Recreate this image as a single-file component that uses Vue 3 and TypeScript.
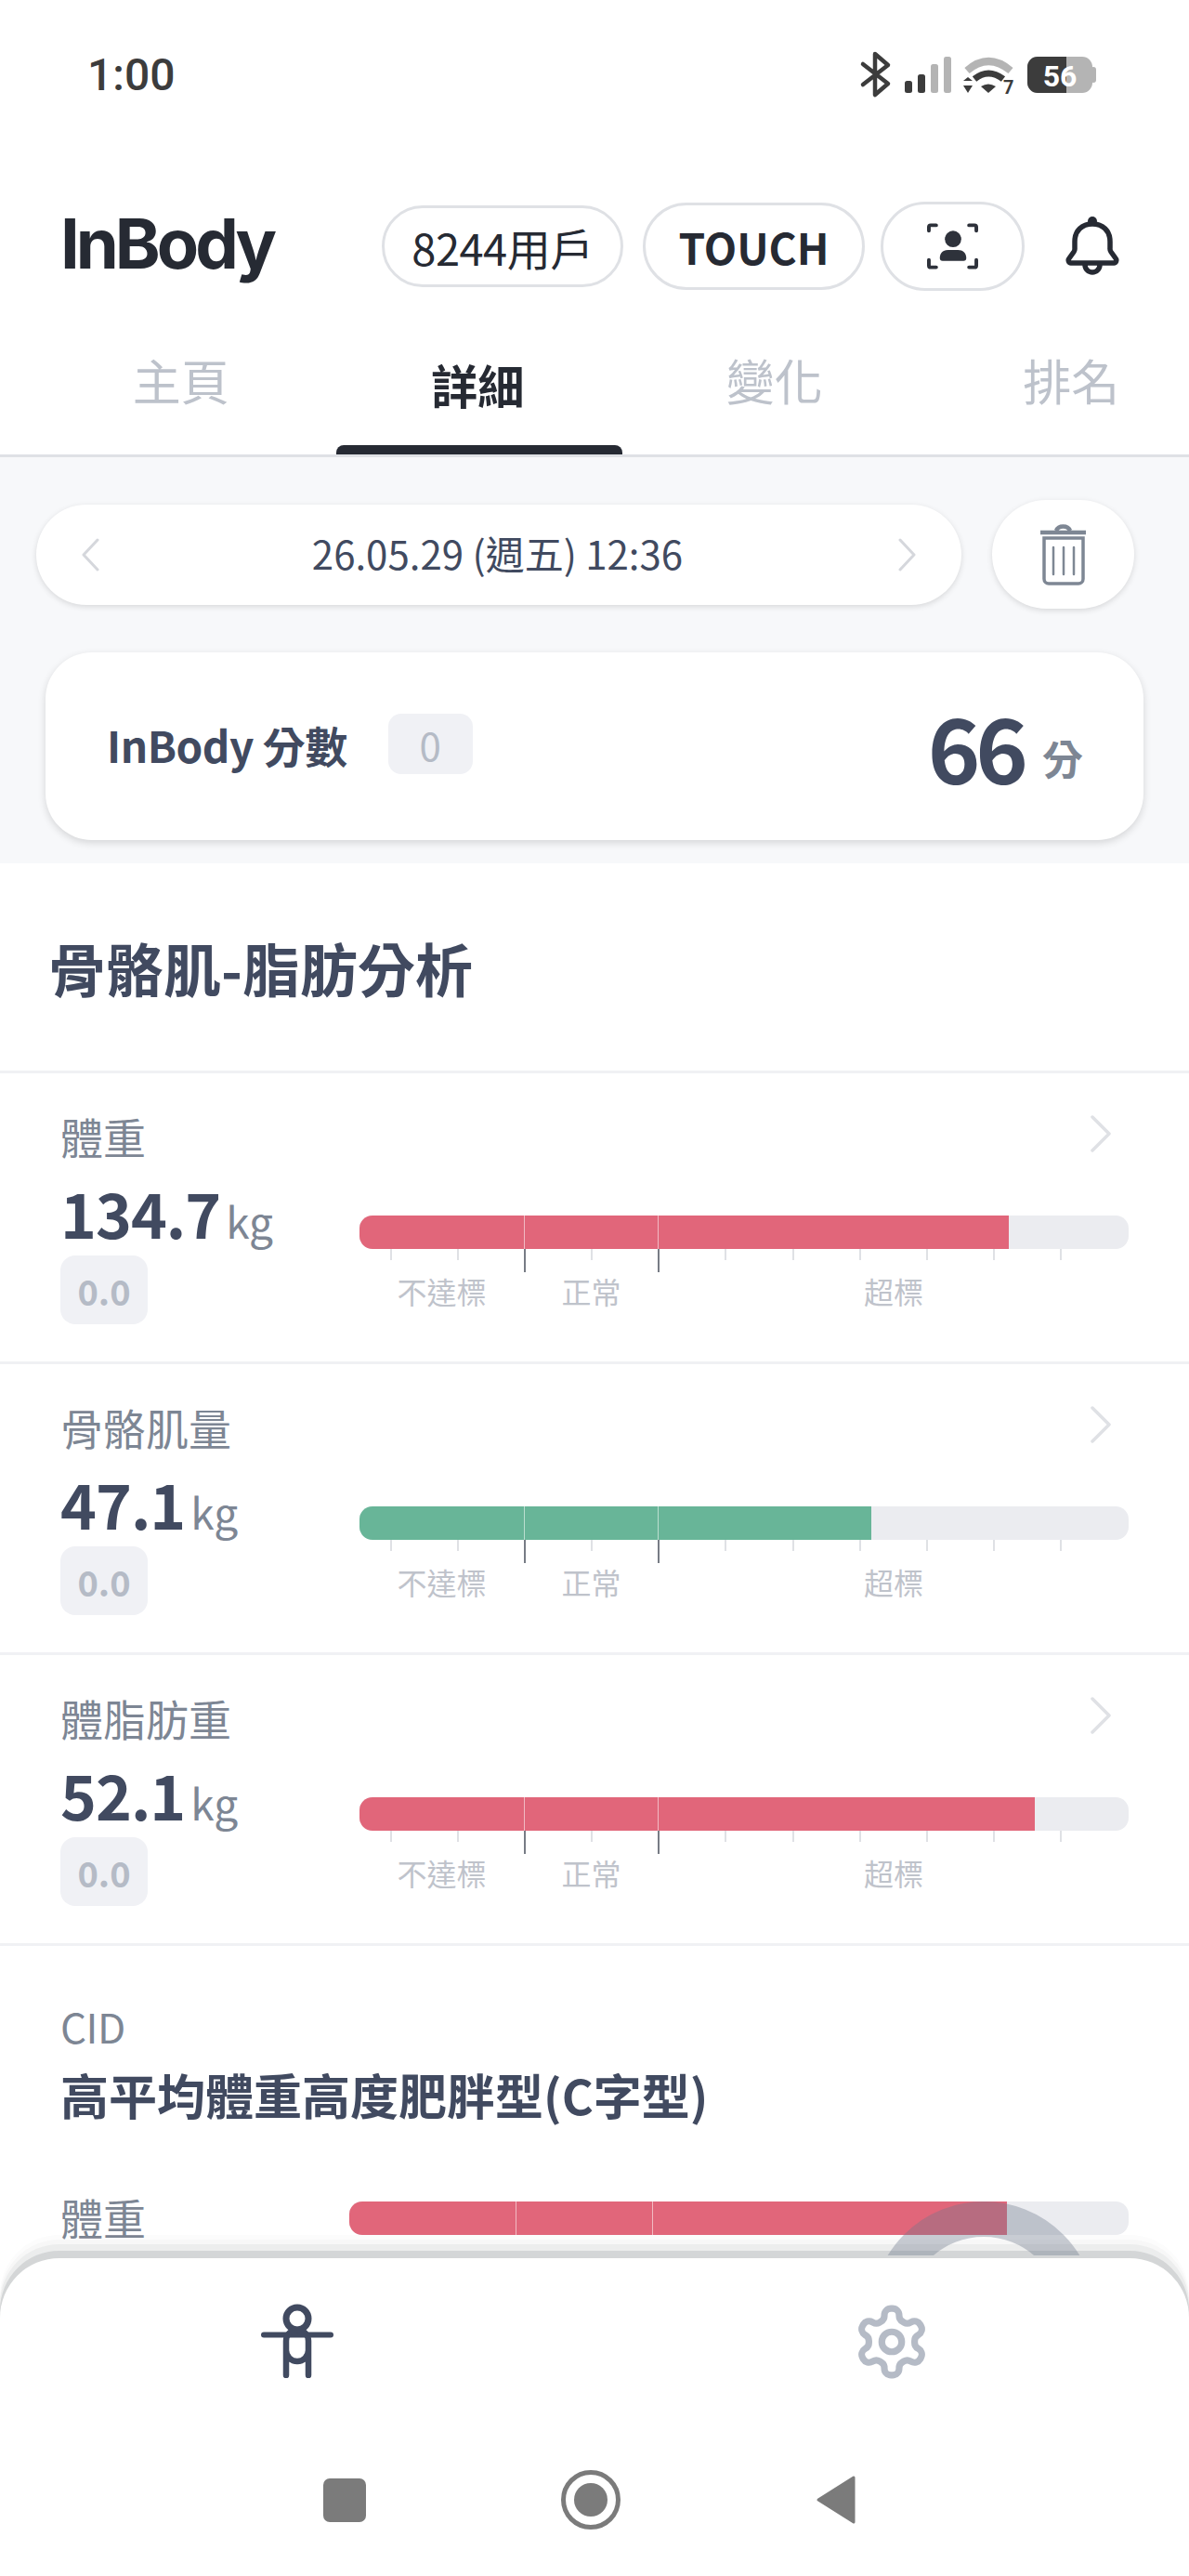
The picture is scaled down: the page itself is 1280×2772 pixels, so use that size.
<script setup lang="ts">
interface Row { label: string; value: string; color: string; fill: number }
const tabs: string[] = ['主頁', '詳細', '變化', '排名']
const rows: Row[] = [
  { label: '體重', value: '134.7', color: '#e1667a', fill: 699 },
  { label: '骨骼肌量', value: '47.1', color: '#68b598', fill: 551 },
  { label: '體脂肪重', value: '52.1', color: '#e1667a', fill: 727 },
]
const ticks: number[] = [0, 1, 2, 3, 4, 5, 6, 7, 8, 9, 10]
</script>

<template>
  <div class="page">
    <div class="status">
      <span class="time">1:00</span>
      <svg class="status-icons" width="270" height="60" viewBox="920 50 270 60">
        <path d="M929 69 L956 90 L942 102 V58 L956 70 L929 91" fill="none" stroke="#3c3c3c" stroke-width="4.5" stroke-linejoin="round" stroke-linecap="round" />
        <rect x="974" y="87" width="8" height="13" rx="2.5" fill="#3c3c3c" />
        <rect x="988" y="80" width="8" height="20" rx="2.5" fill="#3c3c3c" />
        <rect x="1002" y="69" width="8" height="31" rx="2.5" fill="#b4b4b4" />
        <rect x="1016" y="61" width="8" height="39" rx="2.5" fill="#b4b4b4" />
        <path d="M1041 76 Q1064 56 1088 76" fill="none" stroke="#b4b4b4" stroke-width="8" />
        <path d="M1049 85 Q1064 73 1080 85" fill="none" stroke="#3c3c3c" stroke-width="7" />
        <path d="M1056 93 Q1064 88 1072 93 L1064 100 Z" fill="#3c3c3c" />
        <path d="M1037 87 L1042 83 L1047 87 Z M1037 92 L1047 92 L1042 100 Z" fill="#3c3c3c" />
        <text x="1080" y="101" class="wifi-num">7</text>
        <rect x="1106" y="61" width="70" height="39" rx="11" fill="#b4b4b4" />
        <rect x="1174" y="72" width="6" height="17" rx="3" fill="#b4b4b4" />
        <path d="M1148 61 H1117 a11 11 0 0 0 -11 11 V89 a11 11 0 0 0 11 11 H1148 Z" fill="#3c3c3c" />
        <text x="1141" y="93" class="bat-num">56</text>
      </svg>
    </div>

    <header class="top">
      <span class="logo">InBody</span>
      <div class="pill pill-user">8244用戶</div>
      <div class="pill pill-touch">TOUCH</div>
      <div class="pill pill-face">
        <svg width="56" height="54" viewBox="996 240 57 54">
          <path d="M998 250 V246 a2 2 0 0 1 2 -2 H1006 M1042 244 H1048 a2 2 0 0 1 2 2 V250 M998 282 V288 a2 2 0 0 0 2 2 H1006 M1042 290 H1048 a2 2 0 0 0 2 -2 V282" fill="none" stroke="#2e323b" stroke-width="4" stroke-linecap="round" />
          <circle cx="1024.5" cy="259" r="9" fill="#2e323b" />
          <path d="M1010 280 C1010 274 1014 271 1019 271 H1030 C1035 271 1039 274 1039 280 a3 3 0 0 1 -3 3 H1013 a3 3 0 0 1 -3 -3 Z" fill="#2e323b" />
        </svg>
      </div>
      <svg class="bell" width="58" height="65" viewBox="0 0 58 65">
        <circle cx="29" cy="5" r="5" fill="#262a33" />
        <path d="M6 50 H52 a3 3 0 0 0 2 -5 l-5 -7 a6 6 0 0 1 -1 -4 V27 C48 15 40 8 29 8 C18 8 10 15 10 27 V34 a6 6 0 0 1 -1 4 l-5 7 a3 3 0 0 0 2 5 Z M21 52 a8 8 0 0 0 16 0" fill="none" stroke="#262a33" stroke-width="5.500" stroke-linejoin="round" />
      </svg>
    </header>

    <nav class="tabs">
      <div v-for="(t, i) in tabs" :key="t" class="tab" :class="{ active: i === 1 }">{{ t }}</div>
    </nav>

    <section class="summary">
      <div class="date-row">
        <div class="date-pill">
          <svg width="20" height="36" viewBox="0 0 20 36"><path d="M18 2 L3 18 L18 34" fill="none" stroke="#d5d7dc" stroke-width="3" stroke-linecap="round" stroke-linejoin="round" /></svg>
          <span class="date">26.05.29 (週五) 12:36</span>
          <svg width="20" height="36" viewBox="0 0 20 36"><path d="M2 2 L17 18 L2 34" fill="none" stroke="#d5d7dc" stroke-width="3" stroke-linecap="round" stroke-linejoin="round" /></svg>
        </div>
        <div class="trash">
          <svg width="50" height="66" viewBox="1120 564 50 66">
            <path d="M1120 573 H1169 M1137 571 a8 7 0 0 1 15 0" fill="none" stroke="#7e8794" stroke-width="4.5" />
            <path d="M1124 579 H1166 V623 a5 5 0 0 1 -5 5 H1129 a5 5 0 0 1 -5 -5 Z" fill="none" stroke="#7e8794" stroke-width="3.5" />
            <path d="M1134 589 V618 M1145 589 V618 M1156 589 V618" fill="none" stroke="#7e8794" stroke-width="2.5" stroke-linecap="round" />
          </svg>
        </div>
      </div>
      <div class="score-card">
        <span class="score-label">InBody 分數</span>
        <span class="score-badge">0</span>
        <span class="score-value">66</span>
        <span class="score-unit">分</span>
      </div>
    </section>

    <h2 class="section-title">骨骼肌-脂肪分析</h2>

    <div v-for="r in rows" :key="r.label" class="row">
      <div class="row-left">
        <div class="row-label">{{ r.label }}</div>
        <div class="row-value"><b>{{ r.value }}</b><span>kg</span></div>
        <div class="row-badge">0.0</div>
      </div>
      <div class="row-right">
        <svg class="chev" width="24" height="40" viewBox="0 0 24 40"><path d="M3 2 L21 20 L3 38" fill="none" stroke="#dfe1e5" stroke-width="3.5" stroke-linecap="round" stroke-linejoin="round" /></svg>
        <div class="bar">
          <div class="bar-fill" :style="{ width: r.fill + 'px', background: r.color }"></div>
          <i class="sep sep-a"></i>
          <i class="sep sep-b"></i>
        </div>
        <div class="ticks">
          <i v-for="t in ticks" :key="t" class="tick" :class="{ long: t === 2 || t === 4 }"></i>
        </div>
        <div class="bar-labels"><span>不達標</span><span>正常</span><span>超標</span></div>
      </div>
    </div>

    <section class="cid">
      <div class="cid-label">CID</div>
      <div class="cid-title">高平均體重高度肥胖型(C字型)</div>
      <div class="cid-row">
        <span class="row-label">體重</span>
        <div class="bar bar-cid">
          <div class="bar-fill cid-fill"></div>
          <i class="sep sep-c"></i>
          <i class="sep sep-d"></i>
        </div>
      </div>
    </section>

    <svg class="arc" width="208" height="58" viewBox="955 2369 208 58">
      <circle cx="1059" cy="2490" r="102" fill="none" stroke="rgba(107,120,138,0.36)" stroke-width="38" />
    </svg>

    <footer class="sheet">
      <div class="sheet-nav">
        <svg width="80" height="80" viewBox="280 2476 80 80">
          <circle cx="320" cy="2492" r="12" fill="none" stroke="#414a60" stroke-width="7" />
          <path d="M284 2509.500 H356" fill="none" stroke="#414a60" stroke-width="6" stroke-linecap="round" />
          <path d="M308 2553 V2516 a12 12 0 0 1 24 0 V2553 M308 2522 V2526 a12 12 0 0 0 24 0 V2522" fill="none" stroke="#414a60" stroke-width="6.500" stroke-linecap="round" />
        </svg>
        <svg class="gear" width="86" height="86" viewBox="0 0 24 24">
          <path d="M12.22 2h-.44a2 2 0 0 0-2 2v.18a2 2 0 0 1-1 1.73l-.43.25a2 2 0 0 1-2 0l-.15-.08a2 2 0 0 0-2.73.73l-.22.38a2 2 0 0 0 .73 2.73l.15.1a2 2 0 0 1 1 1.72v.51a2 2 0 0 1-1 1.74l-.15.09a2 2 0 0 0-.73 2.73l.22.38a2 2 0 0 0 2.73.73l.15-.08a2 2 0 0 1 2 0l.43.25a2 2 0 0 1 1 1.73V20a2 2 0 0 0 2 2h.44a2 2 0 0 0 2-2v-.18a2 2 0 0 1 1-1.73l.43-.25a2 2 0 0 1 2 0l.15.08a2 2 0 0 0 2.73-.73l.22-.39a2 2 0 0 0-.73-2.73l-.15-.08a2 2 0 0 1-1-1.74v-.5a2 2 0 0 1 1-1.74l.15-.09a2 2 0 0 0 .73-2.73l-.22-.38a2 2 0 0 0-2.73-.73l-.15.08a2 2 0 0 1-2 0l-.43-.25a2 2 0 0 1-1-1.73V4a2 2 0 0 0-2-2z" fill="none" stroke="#b5bbc6" stroke-width="2" stroke-linejoin="round" />
          <circle cx="12" cy="12" r="3" fill="none" stroke="#b5bbc6" stroke-width="2" />
        </svg>
      </div>
      <div class="sys-nav">
        <i class="sys-square"></i>
        <svg width="64" height="64" viewBox="0 0 64 64">
          <circle cx="32" cy="32" r="29.500" fill="none" stroke="#7b7b7b" stroke-width="5" />
          <circle cx="32" cy="32" r="18" fill="#7b7b7b" />
        </svg>
        <svg width="44" height="54" viewBox="0 0 44 54">
          <path d="M41 3 V51 L3 27 Z" fill="#7b7b7b" stroke="#7b7b7b" stroke-width="3" stroke-linejoin="round" />
        </svg>
      </div>
    </footer>
  </div>
</template>

<style scoped>
.page {
  position: relative;
  width: 1280px;
  height: 2772px;
  overflow: hidden;
  background: #fff;
  font-family: "Noto Sans CJK TC", "Noto Sans", sans-serif;
  color: #414a60;
}
.status {
  height: 200px;
  box-sizing: border-box;
  padding: 50px 90px 0 94px;
  display: flex;
  justify-content: space-between;
  align-items: flex-start;
}
.time {
  font-family: Roboto, sans-serif;
  font-size: 48px;
  font-weight: 500;
  line-height: 62px;
  color: #3c3c3c;
}
.status-icons { display: block; }
.wifi-num { font-family: Roboto, sans-serif; font-weight: 700; font-size: 20px; fill: #3c3c3c; }
.bat-num { font-family: Roboto, sans-serif; font-weight: 700; font-size: 32px; fill: #fff; text-anchor: middle; }

.top {
  height: 130px;
  display: flex;
  align-items: center;
  padding-left: 65px;
  color: #262a33;
}
.logo {
  width: 346px;
  flex: none;
  font-family: Inter, sans-serif;
  font-weight: 700;
  font-size: 74px;
  line-height: 96px;
  letter-spacing: -4px;
  margin-top: -6px;
  color: #262a33;
}
.pill {
  box-sizing: border-box;
  display: flex;
  align-items: center;
  justify-content: center;
  border: 3px solid #dfe1e5;
  border-radius: 50px;
  flex: none;
  color: #262a33;
}
.pill-user { width: 260px; height: 88px; font-size: 47px; letter-spacing: -0.5px; margin-right: 21px; }
.pill-touch { width: 239px; height: 94px; font-size: 46px; font-weight: 700; margin-right: 17px; }
.pill-face { width: 155px; height: 96px; margin-right: 44px; }
.bell { flex: none; }

.tabs {
  position: relative;
  display: flex;
  height: 162px;
  box-sizing: border-box;
  padding-left: 35px;
  border-bottom: 3px solid #dfe1e5;
  overflow: hidden;
}
.tab {
  position: relative;
  flex: 0 0 319.500px;
  text-align: center;
  font-size: 52px;
  line-height: 72px;
  padding-top: 43px;
  color: #bdc2cb;
}
.tab.active { color: #262a33; font-weight: 700; padding-top: 47px; font-size: 50px; }
.tab.active::after {
  content: "";
  position: absolute;
  left: 7px;
  width: 308px;
  bottom: 0;
  height: 10px;
  background: #262a33;
  border-radius: 8px 8px 0 0;
}

.summary {
  background: #f7f8fa;
  height: 437px;
  box-sizing: border-box;
  padding: 46px 49px 0 39px;
}
.date-row { display: flex; align-items: center; height: 117px; }
.date-pill {
  box-sizing: border-box;
  width: 996px;
  height: 108px;
  margin-right: 33px;
  padding: 0 48px;
  border-radius: 54px;
  background: #fff;
  box-shadow: 0 2px 6px rgba(0, 0, 0, 0.13);
  display: flex;
  align-items: center;
  justify-content: space-between;
}
.date { font-size: 42px; color: #414a60; margin-top: -5px; margin-left: -3px; }
.trash {
  width: 153px;
  height: 117px;
  border-radius: 59px;
  background: #fff;
  box-shadow: 0 2px 6px rgba(0, 0, 0, 0.13);
  display: flex;
  align-items: center;
  justify-content: center;
}
.score-card {
  margin: 47px 0 0 10px;
  width: 1182px;
  height: 202px;
  box-sizing: border-box;
  padding: 0 65px 0 66px;
  border-radius: 50px;
  background: #fff;
  box-shadow: 0 3px 8px rgba(0, 0, 0, 0.14);
  display: flex;
  align-items: center;
}
.score-label { font-size: 46px; font-weight: 700; letter-spacing: -0.5px; margin-right: 44px; margin-top: -4px; }
.score-badge {
  width: 91px;
  height: 65px;
  border-radius: 14px;
  background: #f0f1f5;
  color: #b5bbc6;
  font-size: 42px;
  display: flex;
  align-items: center;
  justify-content: center;
  margin-top: -6px;
}
.score-value { margin-left: auto; font-size: 96px; font-weight: 700; line-height: 120px; letter-spacing: -5px; }
.score-unit { font-size: 44px; font-weight: 700; color: #7d8694; margin: 24px 0 0 20px; }

.section-title {
  margin: 0;
  height: 223px;
  box-sizing: border-box;
  padding: 70px 0 0 52px;
  font-size: 62px;
  line-height: 84px;
  font-weight: 700;
  color: #414a60;
}
.row {
  border-top: 3px solid #f0f1f4;
  height: 313px;
  box-sizing: border-box;
  padding: 0 65px;
  display: flex;
}
.row-left { width: 322px; flex: none; padding-top: 37px; }
.row-label { font-size: 46px; line-height: 60px; color: #7d8694; }
.row-value {
  margin-top: 10px;
  height: 84px;
  line-height: 84px;
  white-space: nowrap;
}
.row-value b { font-size: 66px; font-weight: 700; color: #414a60; letter-spacing: -1px; }
.row-value span { font-size: 46px; color: #7d8694; margin-left: 6px; }
.row-badge {
  margin-top: 5px;
  width: 94px;
  height: 74px;
  border-radius: 16px;
  background: #f0f1f5;
  color: #b5bbc6;
  font-size: 38px;
  font-weight: 700;
  display: flex;
  align-items: center;
  justify-content: center;
}
.row-right { flex: 1; display: flex; flex-direction: column; padding-top: 45px; }
.chev { align-self: flex-end; margin-right: 18px; flex: none; }
.bar {
  position: relative;
  margin-top: 68px;
  height: 36px;
  border-radius: 14px;
  background: #ebecf0;
  overflow: hidden;
  flex: none;
}
.bar-fill { height: 100%; }
.sep { position: absolute; top: 0; bottom: 0; width: 1px; background: rgba(255, 255, 255, 0.55); }
.sep-a { left: 177px; }
.sep-b { left: 321px; }
.sep-c { left: 179px; }
.sep-d { left: 326px; }
.ticks {
  display: flex;
  justify-content: space-between;
  padding: 0 72px 0 33px;
  height: 25px;
  align-items: flex-start;
}
.tick { width: 2px; height: 12px; background: #dfe1e5; }
.tick.long { width: 2px; height: 25px; background: #777c85; }
.bar-labels {
  display: grid;
  grid-template-columns: 177px 145px 1fr;
  text-align: center;
  font-size: 32px;
  line-height: 40px;
  color: #bfc3cb;
}
.cid {
  border-top: 3px solid #f0f1f4;
  padding: 60px 65px 0;
}
.cid-label { font-size: 44px; line-height: 52px; letter-spacing: -0.5px; color: #7d8694; }
.cid-title { margin-top: 12px; font-size: 52px; line-height: 72px; font-weight: 700; color: #414a60; }
.cid-row { margin-top: 79px; display: flex; align-items: flex-start; }
.cid-row .row-label { width: 311px; flex: none; margin-top: -14px; }
.bar-cid { flex: 1; margin-top: 0; }
.cid-fill { width: 708px; background: #e1667a; }

.arc { position: absolute; left: 955px; top: 2369px; z-index: 3; }
.sheet {
  position: absolute;
  left: 0;
  right: 0;
  bottom: 0;
  height: 342px;
  z-index: 2;
  background: #fff;
  border-radius: 64px 64px 0 0;
  box-shadow:
    0 -8px 0 rgba(40, 50, 60, 0.12),
    0 -15px 0 rgba(40, 50, 60, 0.05),
    0 -20px 0 rgba(40, 50, 60, 0.025),
    0 -25px 0 rgba(40, 50, 60, 0.015);
}
.sheet-nav {
  display: grid;
  grid-template-columns: 1fr 1fr;
  justify-items: center;
  align-items: center;
  padding-top: 44px;
}
.gear { margin-top: 3px; }
.sys-nav {
  display: flex;
  align-items: center;
  padding: 0 358px 0 348px;
  justify-content: space-between;
  margin-top: 95px;
}
.sys-square { width: 46px; height: 47px; border-radius: 7px; background: #7b7b7b; }
</style>

<style>
html, body { margin: 0; background: #fff; }
</style>
